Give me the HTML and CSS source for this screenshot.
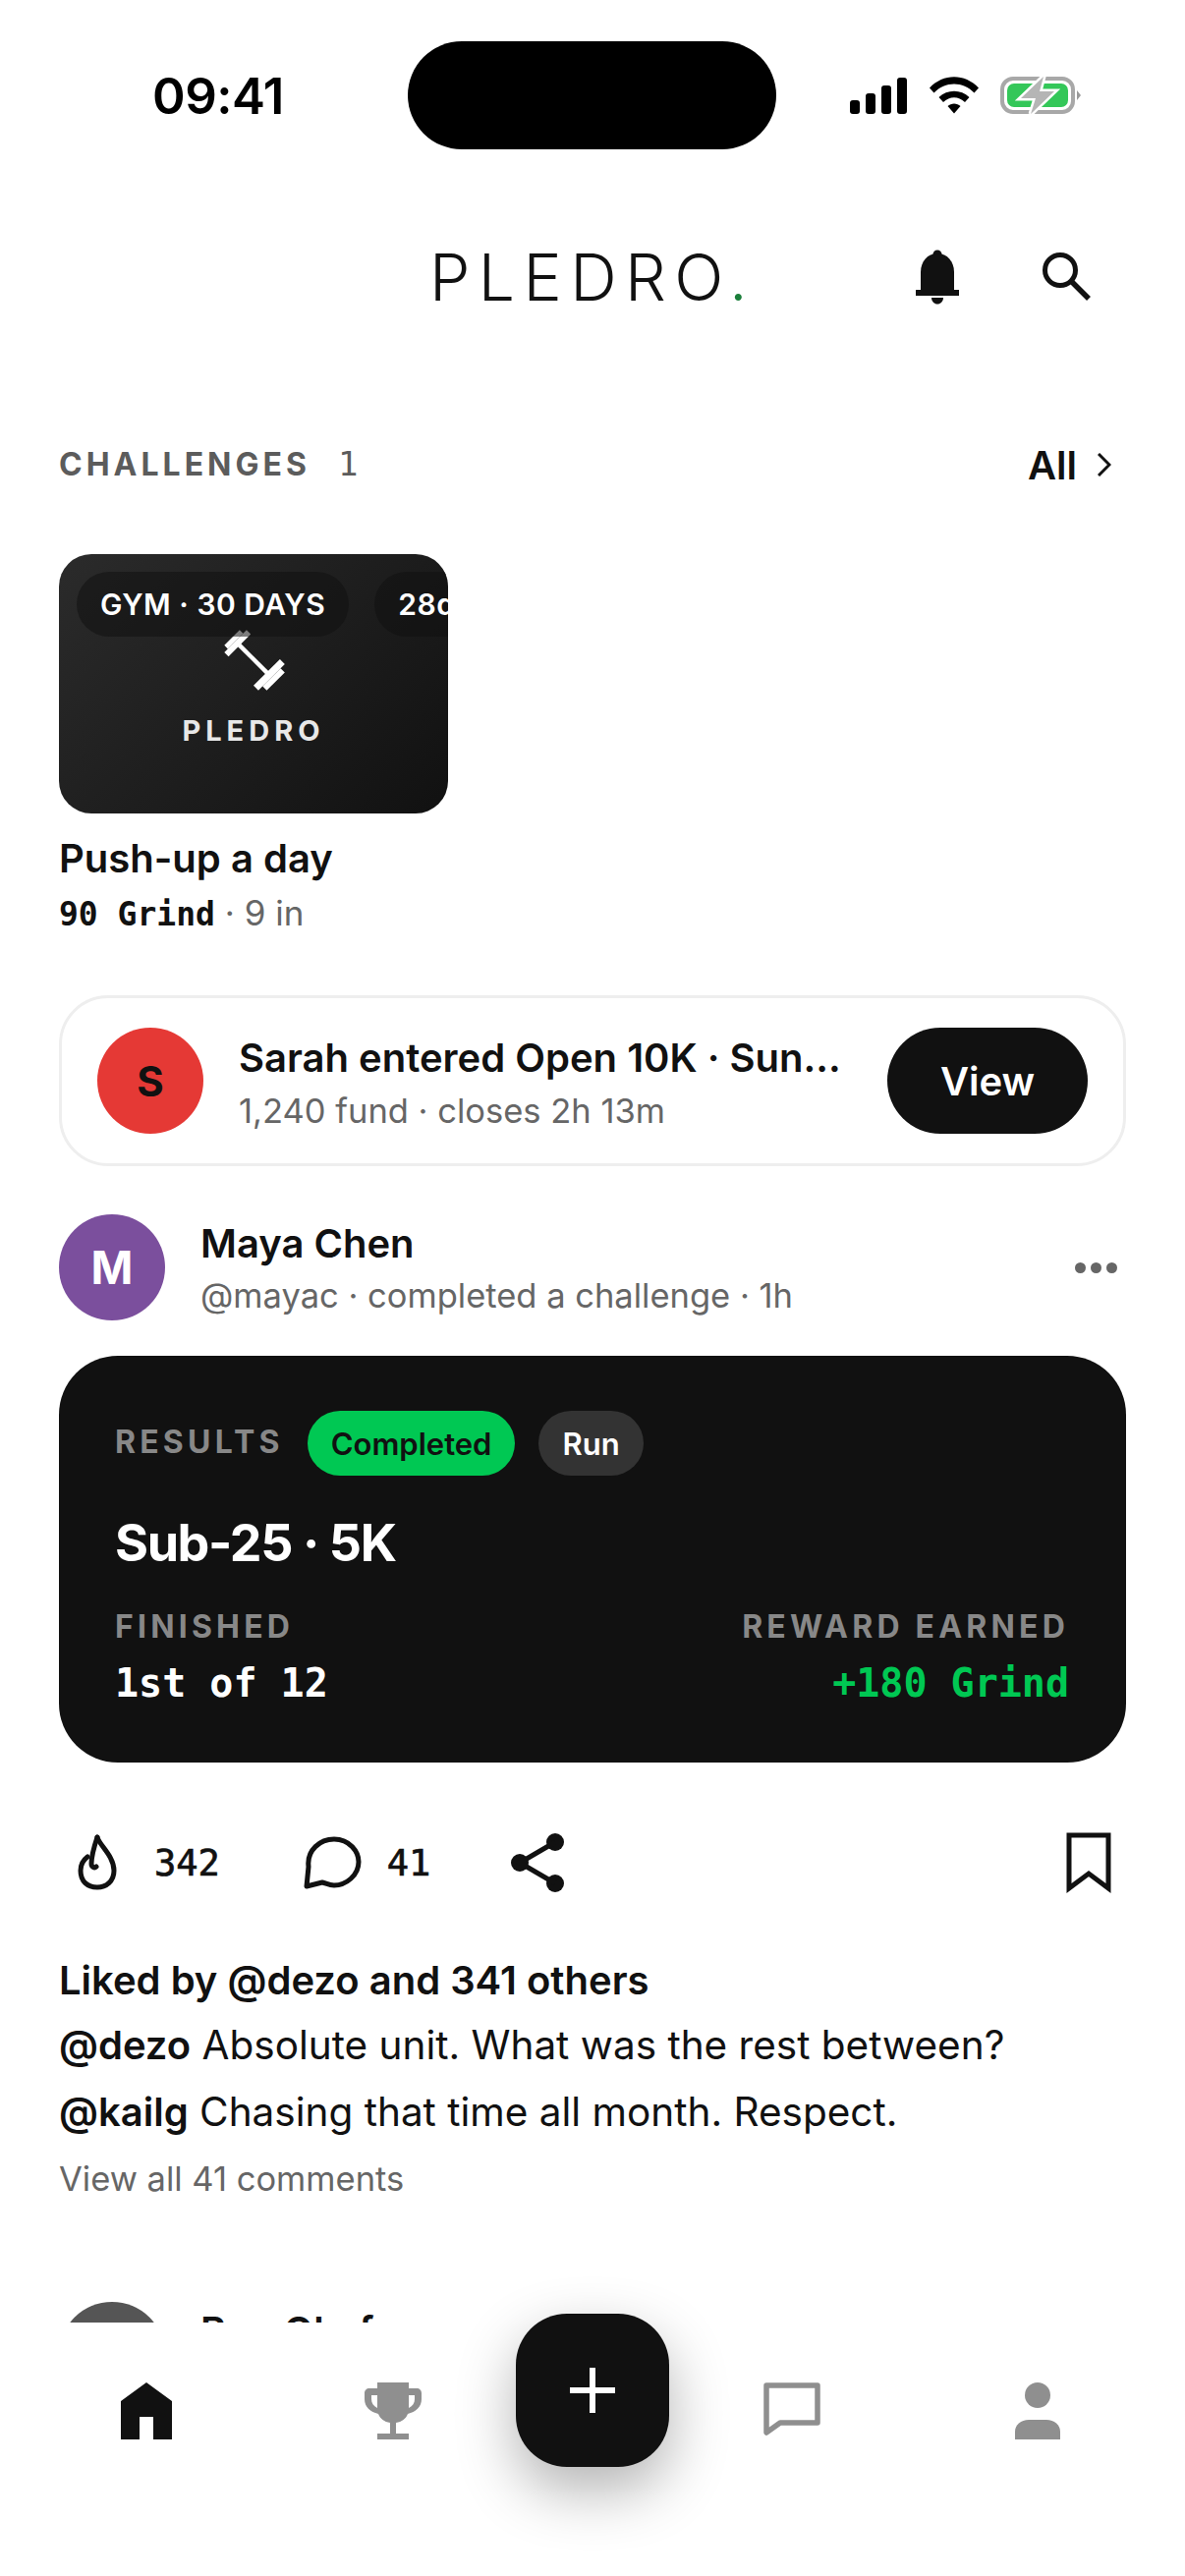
FILE: index.html
```html
<!DOCTYPE html>
<html lang="en">
<head>
<meta charset="utf-8">
<title>Pledro</title>
<link rel="stylesheet" href="styles.css">
</head>
<body>
<div class="phone">
  <div class="status">
    <div class="time">09:41</div>
    <div class="island"></div>
    <div class="status-icons">
      <svg class="ic-signal" width="58" height="37" viewBox="0 0 58 37"><rect x="0" y="23" width="10" height="14" rx="3"/><rect x="16" y="16" width="10" height="21" rx="3"/><rect x="32" y="8" width="10" height="29" rx="3"/><rect x="48" y="0" width="10" height="37" rx="3"/></svg>
      <svg class="ic-wifi" width="50" height="38" viewBox="0 0 50 38"><path d="M0 11.5C14-3.5 36-3.5 50 11.5L45.500 16.500C34 4.500 16 4.500 4.500 16.500Z"/><path d="M9.500 21C18 12.500 32 12.500 40.500 21L36 26C29.500 19.500 20.500 19.500 14 26Z"/><path d="M18.500 30C22 26.500 28 26.500 31.500 30L25 37.500Z"/></svg>
      <svg class="ic-batt" width="82" height="40" viewBox="0 0 82 40"><rect x="2" y="3" width="72" height="34" rx="11" fill="none" stroke="#a8a8a8" stroke-width="4"/><rect x="7" y="8" width="62" height="24" rx="7" fill="#34c759"/><path d="M78 15l4 5-4 5z" fill="#999"/><path class="bolt" d="M44 1L21 23H36L31 39L55 16H40Z"/></svg>
    </div>
  </div>

  <header class="topbar">
    <div></div>
    <div class="logo">PLEDRO<span class="logo-dot">.</span></div>
    <div class="top-actions">
      <svg width="44" height="56" viewBox="0 0 44 56" fill="#111"><circle cx="22" cy="5" r="4.500"/><path d="M5 42V23C5 12 12 4 22 4S39 12 39 23V42Z"/><rect x="0" y="41" width="44" height="6"/><path d="M16 49H28C28 53 25 55.500 22 55.500S16 53 16 49Z"/></svg>
      <svg width="52" height="52" viewBox="0 0 52 52" fill="none" stroke="#111"><circle cx="19" cy="19" r="15.500" stroke-width="5"/><path d="M30 30L48 48" stroke-width="5.500"/></svg>
    </div>
  </header>

  <main class="feed">
    <div class="sec-head">
      <div class="sec-title"><span class="sec-name">CHALLENGES</span><span class="sec-count">1</span></div>
      <div class="sec-all"><span>All</span><svg width="14" height="24" viewBox="0 0 14 24" fill="none" stroke="#111" stroke-width="3"><path d="M1 1L12 12L1 23"/></svg></div>
    </div>

    <div class="ch-card">
      <div class="ch-pills">
        <span class="ch-pill">GYM · 30 DAYS</span>
        <span class="ch-pill">28d left</span>
      </div>
      <svg class="dumbbell" width="70" height="70" viewBox="-35 -35 70 70" fill="#fff"><g transform="rotate(45)"><rect x="-25" y="-2.200" width="50" height="4.400"/><rect x="-26" y="-16" width="6" height="32"/><rect x="-31" y="-11" width="5" height="22"/><rect x="19" y="-19" width="7" height="38"/><rect x="26" y="-13" width="6" height="26"/></g></svg>
      <div class="ch-brand">PLEDRO</div>
    </div>
    <div class="ch-title">Push-up a day</div>
    <div class="ch-meta"><span class="mono-b">90 Grind</span> · 9 in</div>

    <div class="activity">
      <div class="avatar av-red">S</div>
      <div class="act-text">
        <div class="act-title">Sarah entered Open 10K · Sun…</div>
        <div class="act-sub">1,240 fund · closes 2h 13m</div>
      </div>
      <div class="view-btn">View</div>
    </div>

    <div class="post-head">
      <div class="avatar av-purple">M</div>
      <div class="post-who">
        <div class="post-name">Maya Chen</div>
        <div class="post-sub">@mayac · completed a challenge · 1h</div>
      </div>
      <div class="more"><i></i><i></i><i></i></div>
    </div>

    <section class="result">
      <div class="res-top">
        <span class="label res-label">RESULTS</span>
        <span class="tag tag-green">Completed</span>
        <span class="tag tag-dark">Run</span>
      </div>
      <div class="res-title">Sub-25 · 5K</div>
      <div class="res-stats">
        <div>
          <div class="label">FINISHED</div>
          <div class="res-val">1st of 12</div>
        </div>
        <div class="res-right">
          <div class="label">REWARD EARNED</div>
          <div class="res-val res-green">+180 Grind</div>
        </div>
      </div>
    </section>

    <div class="actions">
      <svg class="a-flame" width="44" height="58" viewBox="0 0 44 58" fill="none" stroke="#111" stroke-width="5" stroke-linecap="round" stroke-linejoin="round"><path d="M21 3C23 11 38 22 38 37C38 48 30 54 21 54C11 54 4 48 4 37C4 30 7 26 11 23"/><path d="M21 3C18 12 15 22 15 30C15 33 18 35 20 33"/></svg>
      <span class="a-num n1">342</span>
      <svg class="a-comment" width="61" height="54" viewBox="0 0 61 54" fill="none" stroke="#111" stroke-width="5" stroke-linejoin="round"><path d="M4 51L6 31C4 14 18 3 32 3C48 3 57 16 57 26C57 40 44 50 32 50C27 50 24 48 20 47Z"/></svg>
      <span class="a-num n2">41</span>
      <svg class="a-share" width="58" height="62" viewBox="0 0 58 62" fill="#111" stroke="#111"><circle cx="47" cy="10" r="9" stroke="none"/><circle cx="11" cy="31" r="9" stroke="none"/><circle cx="47" cy="52" r="9" stroke="none"/><path d="M47 10L11 31L47 52" fill="none" stroke-width="5"/></svg>
      <svg class="a-mark" width="46" height="62" viewBox="0 0 46 62" fill="none" stroke="#111" stroke-width="5"><path d="M3 3H43V57L23 42L3 57Z"/></svg>
    </div>

    <div class="likes">Liked by @dezo and 341 others</div>
    <div class="comment"><b>@dezo</b> Absolute unit. What was the rest between?</div>
    <div class="comment"><b>@kailg</b> Chasing that time all month. Respect.</div>
    <div class="view-all">View all 41 comments</div>

    <div class="post-head next">
      <div class="avatar av-gray"></div>
      <div class="post-who">
        <div class="post-name">Ben Okafor</div>
      </div>
    </div>
  </main>

  <nav class="tabbar">
    <svg width="52" height="58" viewBox="0 0 52 58" fill="#111"><path d="M26 0L52 19V58H33V35H19V58H0V19Z"/></svg>
    <svg width="60" height="58" viewBox="0 0 60 58" fill="#8f8f8f"><path d="M14 0H46V6H54C57 6 59 8 59 11V17C59 25 53 30 45 32C43 37 39 40 33 41V52H46V58H14V52H27V41C21 40 17 37 15 32C7 30 1 25 1 17V11C1 8 3 6 6 6H14ZM14 13H8V17C8 21 10 24 14 26ZM46 13V26C50 24 52 21 52 17V13Z"/></svg>
    <div class="tab-gap"></div>
    <svg width="58" height="54" viewBox="0 0 58 54" fill="none" stroke="#8f8f8f" stroke-width="5.500" stroke-linejoin="round"><path d="M3 3H55V41H17L3 51Z"/></svg>
    <svg width="46" height="58" viewBox="0 0 46 58" fill="#8f8f8f"><circle cx="23" cy="13" r="13"/><path d="M0 58V50C0 43 6 38 14 38H32C40 38 46 43 46 50V58Z"/></svg>
    <div class="fab"><svg width="46" height="46" viewBox="0 0 46 46" stroke="#fff" stroke-width="6"><path d="M23 0V46M0 23H46"/></svg></div>
  </nav>
</div>
</body>
</html>
```
FILE: styles.css
```css
* { box-sizing: border-box; }
html, body { margin: 0; padding: 0; background: #fff; }
body { font-family: "Inter", "Liberation Sans", sans-serif; color: #111; }

.phone { width: 1206px; height: 2622px; display: flex; flex-direction: column; overflow: hidden; background: #fff; }

/* status bar */
.status { height: 152px; padding: 42px 0 0 155px; display: flex; align-items: center; flex: none; }
.time { width: 260px; font-size: 51px; font-weight: 600; color: #000; letter-spacing: -0.500px; }
.island { width: 375px; height: 110px; background: #000; border-radius: 55px; flex: none; }
.status-icons { display: flex; align-items: center; margin-left: 75px; }
.ic-wifi { margin-left: 23px; }
.ic-batt { margin-left: 22px; }
.bolt { fill: #b5b5b5; stroke: #fff; stroke-width: 5px; paint-order: stroke; }

/* top bar */
.topbar { height: 260px; display: grid; grid-template-columns: 1fr auto 1fr; align-items: center; padding: 0 94px; flex: none; }
.logo { font-size: 66px; font-weight: 300; letter-spacing: 8.400px; line-height: 1; color: #111; }
.logo-dot { color: #1b7f3b; }
.top-actions { display: flex; justify-content: flex-end; align-items: center; gap: 84px; }

/* feed */
.feed { flex: 1; min-height: 0; overflow: hidden; padding: 0 60px; }

.sec-head { height: 120px; display: flex; align-items: center; justify-content: space-between; padding-right: 15px; }
.sec-title { display: flex; align-items: baseline; gap: 28px; }
.sec-name { font-size: 32px; font-weight: 700; letter-spacing: 4px; color: #5c5c5c; }
.sec-count { font-family: "DejaVu Sans Mono", monospace; font-size: 34px; color: #5c5c5c; }
.sec-all { display: flex; align-items: center; gap: 21px; font-size: 40px; font-weight: 600; padding-top: 2px; }

.ch-card { position: relative; width: 396px; height: 264px; margin-top: 32px; border-radius: 33px; overflow: hidden; background: linear-gradient(135deg, #2b2b2b 0%, #111 100%); display: flex; flex-direction: column; align-items: center; padding-top: 72px; }
.ch-pills { position: absolute; top: 18px; left: 18px; display: flex; gap: 26px; white-space: nowrap; }
.ch-pill { height: 66px; padding: 0 24px; border-radius: 33px; background: rgba(17, 17, 17, 0.55); color: #fff; font-size: 30px; font-weight: 600; display: flex; align-items: center; letter-spacing: 0.500px; }
.dumbbell { flex: none; }
.ch-brand { margin-top: 21px; font-size: 29px; font-weight: 700; letter-spacing: 5px; color: #e8e8e8; line-height: 34px; }
.ch-title { margin-top: 21px; font-size: 40px; font-weight: 600; line-height: 50px; }
.ch-meta { margin-top: 5px; height: 50px; font-size: 35px; line-height: 50px; color: #666; }
.mono-b { font-family: "DejaVu Sans Mono", monospace; font-size: 33px; font-weight: 700; color: #111; }

.activity { margin-top: 59px; height: 174px; border: 3px solid #eee; border-radius: 50px; display: flex; align-items: center; padding: 0 36px; }
.avatar { width: 108px; height: 108px; border-radius: 50%; flex: none; display: flex; align-items: center; justify-content: center; font-weight: 700; }
.av-red { background: #e53935; color: #111; font-size: 42px; }
.av-purple { background: #7b4f9d; color: #fff; font-size: 46px; }
.av-gray { background: #555; }
.act-text { flex: 1; min-width: 0; margin-left: 36px; padding-top: 6px; white-space: nowrap; }
.act-title { font-size: 40px; font-weight: 600; line-height: 52px; }
.act-sub { margin-top: 4px; font-size: 34.500px; line-height: 48px; color: #666; }
.view-btn { width: 204px; height: 108px; border-radius: 54px; background: #111; color: #fff; font-size: 40px; font-weight: 600; display: flex; align-items: center; justify-content: center; flex: none; }

.post-head { margin-top: 49px; display: flex; align-items: center; }
.post-who { flex: 1; margin-left: 36px; padding-top: 4px; }
.post-name { font-size: 40px; font-weight: 600; line-height: 50px; }
.post-sub { margin-top: 4px; font-size: 34.500px; line-height: 48px; color: #666; }
.more { display: flex; gap: 5px; padding-right: 9px; }
.more i { width: 11px; height: 11px; border-radius: 50%; background: #666; display: block; }

.result { margin-top: 36px; height: 414px; border-radius: 60px; background: #111; padding: 56px 58px 0 57px; color: #fff; }
.res-top { display: flex; align-items: center; gap: 24px; }
.label { font-size: 32px; font-weight: 700; letter-spacing: 4.200px; color: #888; line-height: 36px; }
.res-label { position: relative; top: -1px; }
.tag { height: 66px; padding: 0 24px; border-radius: 33px; font-size: 31px; font-weight: 600; display: flex; align-items: center; }
.tag-green { background: #00c853; color: #111; }
.tag-dark { background: #333; color: #fff; }
.res-title { margin-top: 34px; font-size: 52px; font-weight: 700; line-height: 70px; letter-spacing: -1.400px; }
.res-stats { margin-top: 32px; display: flex; justify-content: space-between; }
.res-right { text-align: right; }
.res-val { margin-top: 11px; font-family: "DejaVu Sans Mono", monospace; font-size: 40px; font-weight: 700; line-height: 56px; }
.res-green { color: #00c853; }

.actions { margin-top: 52px; height: 100px; display: flex; align-items: center; padding: 0 15px 0 18px; }
.a-num { font-family: "DejaVu Sans Mono", monospace; font-size: 37px; color: #111; -webkit-text-stroke: 0.7px #111; }
.n1 { margin-left: 35px; }
.a-comment { margin-left: 84px; }
.n2 { margin-left: 25px; }
.a-share { margin-left: 80px; }
.a-mark { margin-left: auto; }

.likes { margin-top: 38px; font-size: 40px; font-weight: 600; line-height: 64px; }
.comment { font-size: 40.500px; line-height: 68px; color: #111; white-space: nowrap; }
.comment b { font-size: 40px; font-weight: 600; }
.view-all { margin-top: 2px; font-size: 34.500px; line-height: 64px; color: #666; }
.next { margin-top: 93px; align-items: flex-start; }
.next .post-who { padding-top: 5px; }

/* tab bar */
.tabbar { position: relative; flex: none; height: 258px; background: #fff; display: grid; grid-template-columns: 298px 204px 204px 200px 300px; justify-items: center; align-items: start; padding-top: 61px; }
.fab { position: absolute; top: -9px; left: 525px; width: 156px; height: 156px; border-radius: 52px; background: #111; display: flex; align-items: center; justify-content: center; box-shadow: 0 24px 60px rgba(0, 0, 0, 0.3); }
```
